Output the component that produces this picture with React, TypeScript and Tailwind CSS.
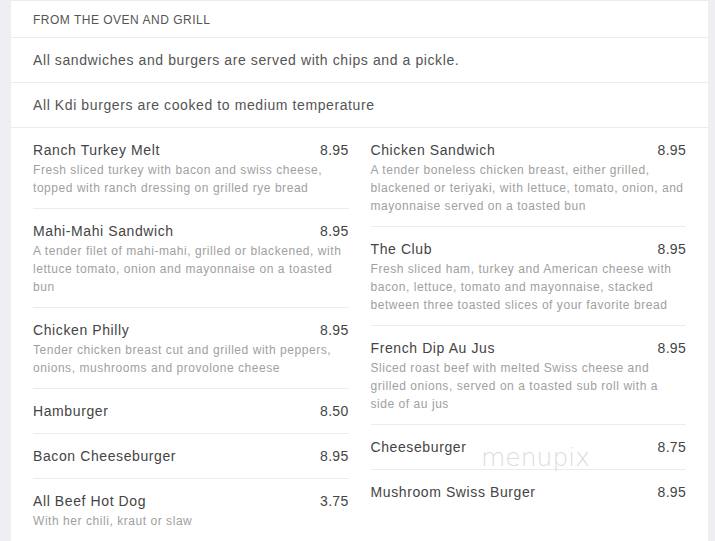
import React from "react";

type Item = { name: string; price: string; desc?: string };

const left: Item[] = [
  { name: "Ranch Turkey Melt", price: "8.95", desc: "Fresh sliced turkey with bacon and swiss cheese, topped with ranch dressing on grilled rye bread" },
  { name: "Mahi-Mahi Sandwich", price: "8.95", desc: "A tender filet of mahi-mahi, grilled or blackened, with lettuce tomato, onion and mayonnaise on a toasted bun" },
  { name: "Chicken Philly", price: "8.95", desc: "Tender chicken breast cut and grilled with peppers, onions, mushrooms and provolone cheese" },
  { name: "Hamburger", price: "8.50" },
  { name: "Bacon Cheeseburger", price: "8.95" },
  { name: "All Beef Hot Dog", price: "3.75", desc: "With her chili, kraut or slaw" },
];

const right: Item[] = [
  { name: "Chicken Sandwich", price: "8.95", desc: "A tender boneless chicken breast, either grilled, blackened or teriyaki, with lettuce, tomato, onion, and mayonnaise served on a toasted bun" },
  { name: "The Club", price: "8.95", desc: "Fresh sliced ham, turkey and American cheese with bacon, lettuce, tomato and mayonnaise, stacked between three toasted slices of your favorite bread" },
  { name: "French Dip Au Jus", price: "8.95", desc: "Sliced roast beef with melted Swiss cheese and grilled onions, served on a toasted sub roll with a side of au jus" },
  { name: "Cheeseburger", price: "8.75" },
  { name: "Mushroom Swiss Burger", price: "8.95" },
];

function Column({ items }: { items: Item[] }) {
  return (
    <div className="flex flex-col">
      {items.map((it, i) => (
        <div
          key={it.name}
          className={
            "pt-3 " +
            (it.desc ? "pb-[11px] " : "pb-3 ") +
            (i > 0 ? "border-t border-[#ececec]" : "")
          }
        >
          <div className="flex justify-between text-[14px] leading-[20px] text-[#444] tracking-[0.6px]">
            <span>{it.name}</span>
            <span className="tracking-[0.3px]">{it.price}</span>
          </div>
          {it.desc && (
            <div className="mt-px text-[12px] leading-[18px] text-[#a0a0a0] tracking-[0.55px]">{it.desc}</div>
          )}
        </div>
      ))}
    </div>
  );
}

export default function App() {
  return (
    <div
      className="w-[715px] h-[541px] overflow-hidden bg-[#eeeef3] pl-[11px] pr-[7px]"
      style={{ fontFamily: '"Liberation Sans", Arial, sans-serif' }}
    >
      <div className="relative h-full bg-white border-t border-[#ececec]">
        <div className="px-[22px] pt-[11px] pb-[9px] text-[12px] leading-[16px] text-[#555] uppercase tracking-[0.5px] border-b border-[#ececec]">
          From the Oven and Grill
        </div>
        <div className="px-[22px] py-3 text-[14px] leading-[20px] text-[#555] tracking-[0.6px] border-b border-[#ececec]">
          All sandwiches and burgers are served with chips and a pickle.
        </div>
        <div className="px-[22px] py-3 text-[14px] leading-[20px] text-[#555] tracking-[0.6px] border-b border-[#ececec]">
          All Kdi burgers are cooked to medium temperature
        </div>
        <div className="grid grid-cols-2 gap-x-[22px] px-[22px]">
          <Column items={left} />
          <Column items={right} />
        </div>
        <div
          className="absolute left-[470px] top-[442px] text-[25px] leading-[30px] text-[#dcdcdc]"
          style={{ fontFamily: '"DejaVu Sans", sans-serif', fontWeight: 200 }}
        >
          menupix
        </div>
      </div>
    </div>
  );
}
